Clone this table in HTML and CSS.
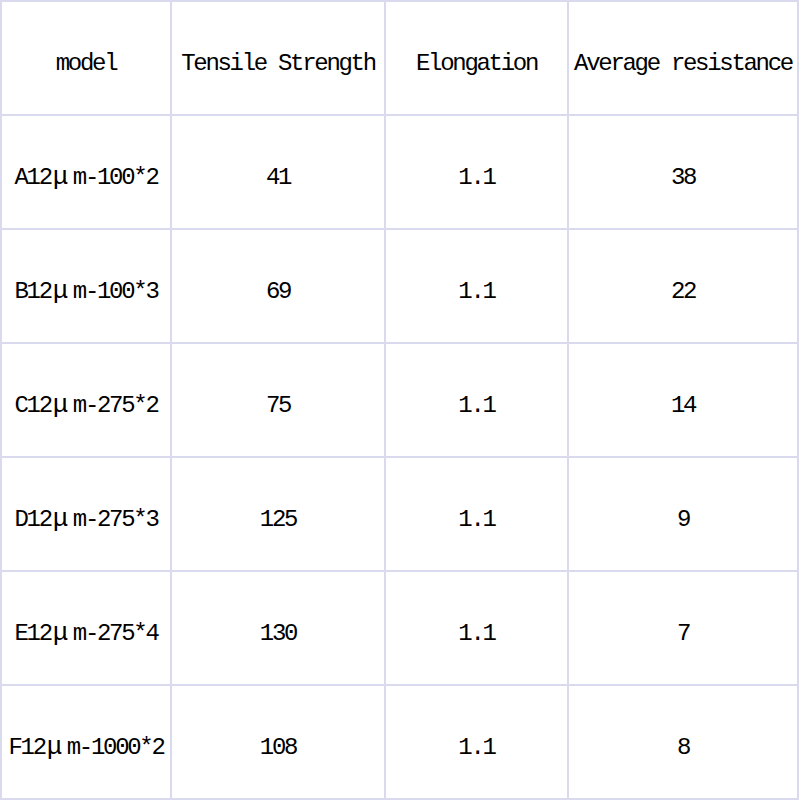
FILE: index.html
```html
<!DOCTYPE html>
<html>
<head>
<meta charset="utf-8">
<link rel="stylesheet" href="styles.css">
</head>
<body>
<div class="table">
  <div class="cell">model</div>
  <div class="cell">Tensile Strength</div>
  <div class="cell">Elongation</div>
  <div class="cell">Average resistance</div>

  <div class="cell">A12<span class="mu">μ</span>m-100*2</div>
  <div class="cell">41</div>
  <div class="cell">1.1</div>
  <div class="cell">38</div>

  <div class="cell">B12<span class="mu">μ</span>m-100*3</div>
  <div class="cell">69</div>
  <div class="cell">1.1</div>
  <div class="cell">22</div>

  <div class="cell">C12<span class="mu">μ</span>m-275*2</div>
  <div class="cell">75</div>
  <div class="cell">1.1</div>
  <div class="cell">14</div>

  <div class="cell">D12<span class="mu">μ</span>m-275*3</div>
  <div class="cell">125</div>
  <div class="cell">1.1</div>
  <div class="cell">9</div>

  <div class="cell">E12<span class="mu">μ</span>m-275*4</div>
  <div class="cell">130</div>
  <div class="cell">1.1</div>
  <div class="cell">7</div>

  <div class="cell">F12<span class="mu">μ</span>m-1000*2</div>
  <div class="cell">108</div>
  <div class="cell">1.1</div>
  <div class="cell">8</div>
</div>
</body>
</html>
```
FILE: styles.css
```css
html, body {
  margin: 0;
  padding: 0;
  background: #ffffff;
}

.table {
  box-sizing: border-box;
  width: 799px;
  height: 800px;
  display: grid;
  grid-template-columns: 168px 212px 181px 1fr;
  grid-template-rows: repeat(7, 1fr);
  gap: 2px;
  background: #dadaee;
  border: 2px solid #dadaee;
}

.cell {
  background: #ffffff;
  display: flex;
  align-items: center;
  justify-content: center;
  padding-top: 10px;
  box-sizing: border-box;
  font-family: "Liberation Mono", "DejaVu Sans Mono", monospace;
  font-size: 24px;
  letter-spacing: -2.3px;
  color: #000000;
  white-space: nowrap;
}

.mu {
  display: inline-block;
  width: 22px;
  text-align: left;
  padding-left: 2px;
  box-sizing: border-box;
  letter-spacing: 0;
  font-size: 26px;
  vertical-align: 5px;
}
```
